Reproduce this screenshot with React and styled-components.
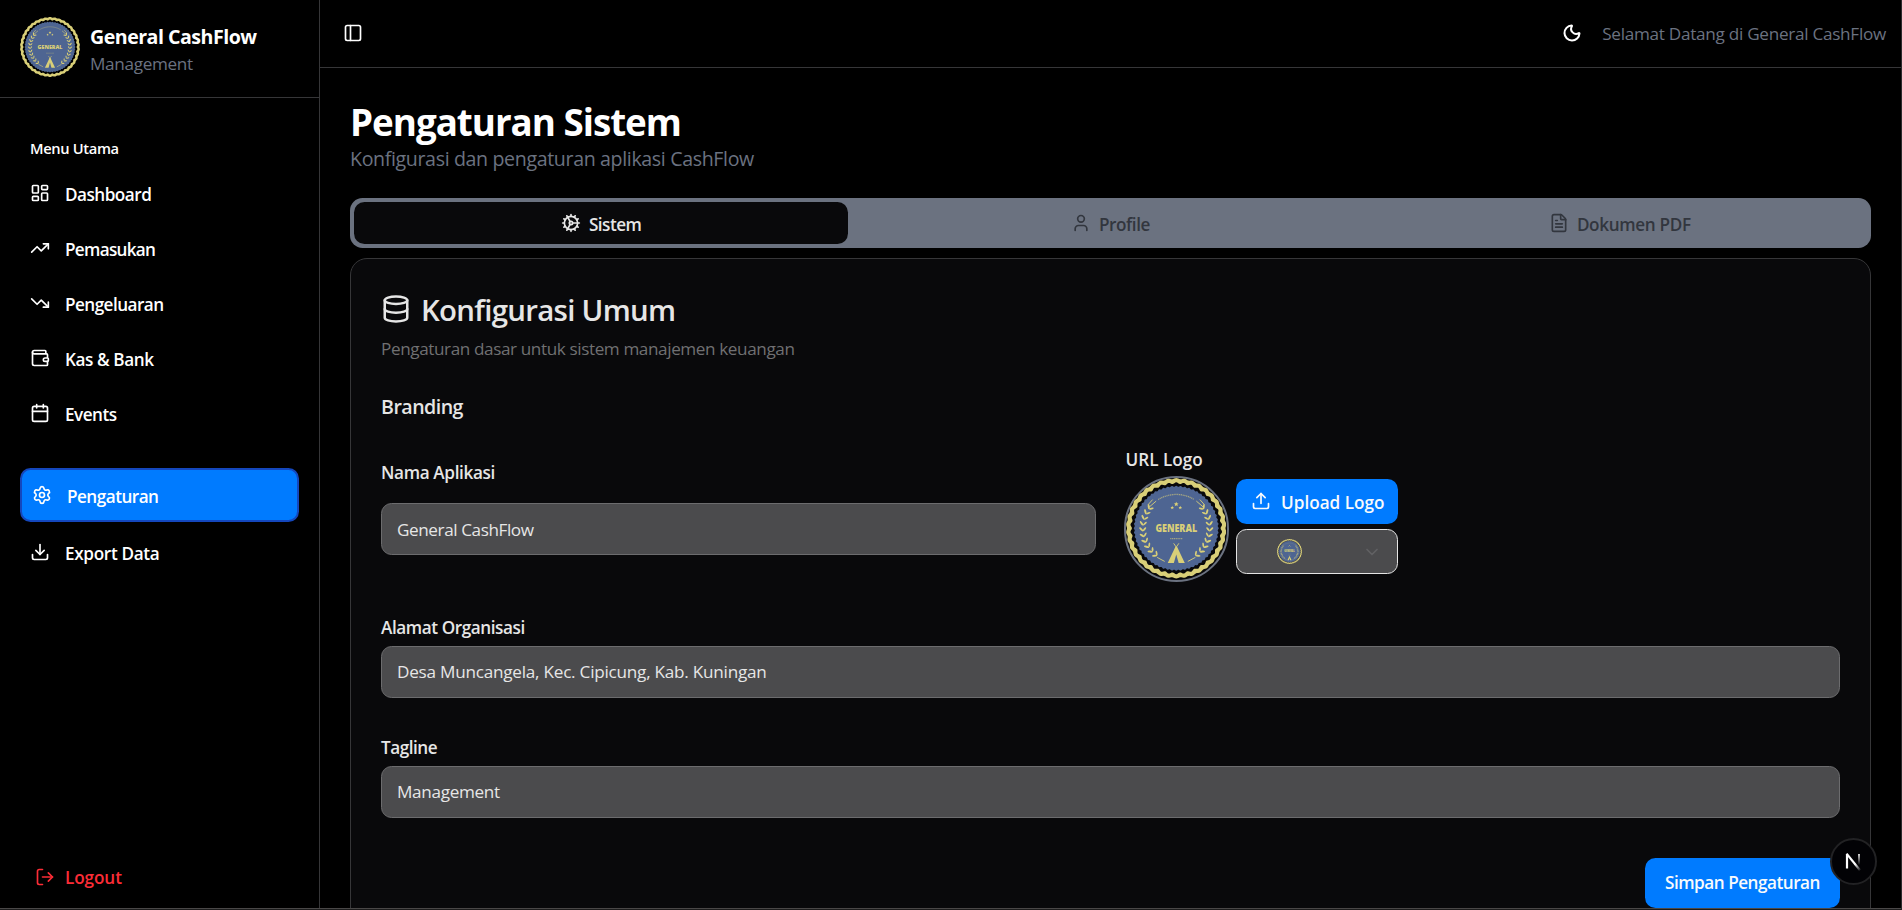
import React from "react";
import styled, { createGlobalStyle, css } from "styled-components";
import {
  LayoutDashboard, TrendingUp, TrendingDown, Wallet, Calendar, Settings, Download,
  LogOut, PanelLeft, Moon, Cog, User, FileText, Database, Upload, ChevronDown,
} from "lucide-react";

const color = {
  bg: "#000000",
  card: "#09090b",
  line: "#363638",
  muted: "#6b7280",
  primary: "#007bff",
  primaryDark: "#1447bd",
  field: "#4b4b4d",
  fieldLine: "#6c6c6e",
  text: "#e6e6e6",
  danger: "#fb2c36",
};

const GlobalStyle = createGlobalStyle`
  * { box-sizing: border-box; }
  body { margin: 0; background: ${color.bg}; overflow: hidden; }
  body, button, input {
    font-family: "Open Sans", "Noto Sans", sans-serif;
    font-size: 17.15px;
  }
  svg { flex: none; display: block; }
`;

/* ---------- Frame ---------- */

const Frame = styled.div`
  display: flex;
  height: 910px;
  background: ${color.bg};
  color: #fff;
  border-right: 1px solid #2c2c2e;
  border-bottom: 1px solid #1c1c1c;
`;

const Shell = styled.div`
  display: flex;
  flex: 1;
  min-width: 0;
  border-bottom: 1px solid #4a4848;
`;

/* ---------- Sidebar ---------- */

const Sidebar = styled.aside`
  display: flex;
  flex-direction: column;
  flex: none;
  width: 320px;
  border-right: 1px solid ${color.line};
`;

const Brand = styled.header`
  display: flex;
  align-items: center;
  gap: 10px;
  height: 98px;
  padding: 0 20px 3px;
  border-bottom: 1px solid ${color.line};
`;

const BrandText = styled.div`
  display: flex;
  flex-direction: column;
  padding-top: 5px;
`;

const BrandName = styled.strong`
  font-size: 19.6px;
  font-weight: 700;
  line-height: 28px;
  letter-spacing: -0.5px;
`;

const BrandTagline = styled.span`
  line-height: 26px;
  letter-spacing: -0.32px;
  color: ${color.muted};
`;

const Nav = styled.nav`
  display: flex;
  flex-direction: column;
  flex: 1;
  padding: 30px 20px 0;
`;

const NavHeading = styled.h2`
  margin: 0;
  padding-left: 10px;
  font-size: 14.7px;
  font-weight: 600;
  line-height: 41px;
  letter-spacing: -0.35px;
`;

const NavGroup = styled.div`
  display: flex;
  flex-direction: column;
  gap: ${(p) => p.$gap}px;
  & + & { margin-top: 29px; }
`;

const NavItem = styled.a`
  display: flex;
  align-items: center;
  gap: 15px;
  height: 50px;
  padding-left: 10px;
  border-radius: 10.5px;
  font-weight: 600;
  letter-spacing: ${(p) => p.$track}px;
  svg { margin-bottom: 2px; }
  ${(p) =>
    p.$active &&
    css`
      height: 54px;
      padding-top: 2px;
      background: ${color.primary};
      border: 2px solid ${color.primaryDark};
    `}
`;

const LogoutLink = styled.a`
  display: flex;
  align-items: center;
  gap: 10px;
  height: 50px;
  margin: 0 20px 6px;
  padding-left: 15px;
  font-weight: 600;
  letter-spacing: -0.1px;
  color: ${color.danger};
`;

/* ---------- Main ---------- */

const Main = styled.main`
  display: flex;
  flex-direction: column;
  flex: 1;
  min-width: 0;
  overflow: hidden;
`;

const TopBar = styled.header`
  display: flex;
  align-items: center;
  justify-content: space-between;
  flex: none;
  height: 68px;
  padding: 0 15px 0 23px;
  border-bottom: 1px solid ${color.line};
  svg { margin-bottom: 1px; }
`;

const TopBarEnd = styled.div`
  display: flex;
  align-items: center;
  gap: 20px;
`;

const Welcome = styled.span`
  letter-spacing: -0.28px;
  color: ${color.muted};
`;

const Content = styled.section`
  display: flex;
  flex-direction: column;
  padding: 31px 30px 0;
`;

const PageTitle = styled.h1`
  margin: 0;
  font-size: 36.75px;
  font-weight: 700;
  line-height: 47px;
  letter-spacing: -1.01px;
`;

const PageSubtitle = styled.p`
  margin: 0 0 26px;
  font-size: 19.6px;
  line-height: 26px;
  letter-spacing: -0.36px;
  color: ${color.muted};
`;

const TabList = styled.div`
  display: grid;
  grid-template-columns: repeat(3, 1fr);
  gap: 15px;
  height: 50px;
  padding: 4px;
  border-radius: 12.5px;
  background: ${color.muted};
`;

const Tab = styled.button`
  display: flex;
  align-items: center;
  justify-content: center;
  gap: 8px;
  padding: 2px 0 0;
  border: 0;
  border-radius: 10.5px;
  font-weight: 600;
  letter-spacing: ${(p) => p.$track}px;
  background: ${(p) => (p.$active ? color.card : "transparent")};
  color: ${(p) => (p.$active ? color.text : "#32363e")};
  svg { margin-bottom: 2px; }
`;

/* ---------- Settings card ---------- */

const Card = styled.article`
  display: flex;
  flex-direction: column;
  margin-top: 10px;
  padding: 30px;
  border: 1px solid ${color.line};
  border-radius: 17px;
  background: ${color.card};
  color: ${color.text};
`;

const CardTitle = styled.h2`
  display: flex;
  align-items: center;
  gap: 10px;
  margin: 0;
  font-size: 29.4px;
  font-weight: 600;
  line-height: 42px;
  letter-spacing: -0.7px;
  svg { margin-bottom: 2px; }
`;

const CardDescription = styled.p`
  margin: 5px 0 29px;
  line-height: 26px;
  letter-spacing: -0.4px;
  color: #707072;
`;

const SectionTitle = styled.h3`
  margin: 0 0 26px;
  font-size: 19.6px;
  font-weight: 600;
  line-height: 31px;
  letter-spacing: -0.53px;
`;

const BrandingGrid = styled.div`
  display: grid;
  grid-template-columns: 1fr 1fr;
  gap: 30px;
`;

const Field = styled.div`
  display: flex;
  flex-direction: column;
  gap: ${(p) => p.$gap || 6}px;
  padding-top: ${(p) => p.$offset || 0}px;
`;

const FieldLabel = styled.label`
  font-weight: 600;
  line-height: 24px;
  letter-spacing: ${(p) => p.$track || 0}px;
`;

const TextInput = styled.input`
  width: 100%;
  height: 52px;
  padding: 0 15px;
  border: 1px solid ${color.fieldLine};
  border-radius: 10.5px;
  background: ${color.field};
  color: ${color.text};
  letter-spacing: ${(p) => p.$track}px;
`;

const LogoRow = styled.div`
  display: flex;
  align-items: flex-start;
  gap: 7px;
  margin-left: -2px;
`;

const LogoPreview = styled.div`
  display: flex;
  width: 105.5px;
  height: 105.5px;
  border: 2.5px solid ${color.muted};
  border-radius: 50%;
`;

const LogoActions = styled.div`
  display: flex;
  flex-direction: column;
  gap: 5px;
  width: 162px;
  padding-top: 3px;
`;

const PrimaryButton = styled.button`
  display: flex;
  align-items: center;
  gap: 10px;
  height: ${(p) => p.$height}px;
  padding: 0;
  padding-left: ${(p) => p.$inset}px;
  border: 0;
  border-radius: 10.5px;
  background: ${color.primary};
  color: #f8fafc;
  font-weight: 600;
  letter-spacing: ${(p) => p.$track}px;
`;

const UploadButton = styled(PrimaryButton)`
  padding-top: 1px;
  svg { margin-bottom: 2px; }
`;

const SaveButton = styled(PrimaryButton)`
  width: 195px;
`;

const LogoSelect = styled.button`
  display: flex;
  align-items: center;
  justify-content: space-between;
  height: 45px;
  padding: 0 15px 0 40px;
  border: 1px solid #e5e5e5;
  border-radius: 10.5px;
  background: ${color.field};
  color: #616163;
`;

const OrgField = styled(Field)`
  margin-top: 34px;
`;

const TaglineField = styled(Field)`
  margin-top: 38px;
`;

const CardFooter = styled.footer`
  display: flex;
  justify-content: flex-end;
  margin-top: 40px;
`;

const DevBadge = styled.div`
  position: fixed;
  left: 1830px;
  top: 838px;
  display: flex;
  align-items: center;
  justify-content: center;
  width: 47px;
  height: 47px;
  border: 2px solid #222224;
  border-radius: 50%;
  background: #020205;
`;

/* ---------- Emblem ---------- */

const wavy = (radius, amp, waves) => {
  const steps = waves * 8;
  let d = "";
  for (let i = 0; i < steps; i += 1) {
    const a = (i / steps) * Math.PI * 2;
    const r = radius + amp * Math.cos(a * waves);
    d += `${i ? "L" : "M"}${(r * Math.sin(a)).toFixed(2)} ${(-r * Math.cos(a)).toFixed(2)}`;
  }
  return `${d}Z`;
};

const ringPath = wavy(49.5, 0.5, 38) + wavy(44.9, 0.8, 38);
const discPath = wavy(41.8, 0.5, 60);
const leafAngles = [-36, -26, -16, -6, 4, 14, 24, 34, 44, 54];

function Laurel({ flip }) {
  return (
    <g transform={flip ? "scale(-1 1)" : undefined}>
      {leafAngles.map((a) => (
        <g key={a} transform={`rotate(${-a}) translate(-33 0)`}>
          <ellipse cx="-1.8" cy="-1.3" rx="2.7" ry="1" transform="rotate(48 -1.8 -1.3)" />
          <ellipse cx="1.5" cy="-1.3" rx="2.4" ry="0.9" transform="rotate(-48 1.5 -1.3)" />
        </g>
      ))}
      <path d="M-19 29L-11.5 33" stroke="#d9cf78" strokeWidth="0.9" />
      <path d="M-27 -21L-20 -27M-28 -23.5L-23.5 -28.5" stroke="#d9cf78" strokeWidth="0.9" />
    </g>
  );
}

function Emblem({ size }) {
  const star = "M0-2.4L.7-.8 2.3-.7 1.1.4 1.5 2.1 0 1.2-1.5 2.1-1.1.4-2.3-.7-.7-.8Z";
  return (
    <svg width={size} height={size} viewBox="-50 -50 100 100" fill="#d9cf78">
      <path d={ringPath} fillRule="evenodd" />
      <path d={discPath} fill="#4e6592" />
      <Laurel />
      <Laurel flip />
      <path
        d="M-18 -28.5A34 34 0 0 1 18 -28.5"
        fill="none"
        stroke="#a3a583"
        strokeWidth="1.3"
        strokeDasharray="1.2 0.6"
      />
      <path d={star} transform="translate(0 -24)" />
      <path d={star} transform="translate(-4 -20.5) scale(.75)" />
      <path d={star} transform="translate(4 -20.5) scale(.75)" />
      <text
        y="3.6"
        textAnchor="middle"
        fontFamily="Open Sans, sans-serif"
        fontWeight="800"
        fontSize="9.8"
        textLength="41.5"
        lengthAdjust="spacingAndGlyphs"
      >
        GENERAL
      </text>
      <path d="M-6 10.3H6" stroke="#a3a583" strokeWidth="1.2" strokeDasharray="1.2 0.6" />
      <path d="M-0.8 18.5L-8.5 34.5H-2.4L0 26L2.4 34.5H8.5L0.8 18.5Z" />
      <path d="M-2.6 15L0.8 20M2.6 15L-0.8 20" stroke="#d9cf78" strokeWidth="0.9" />
    </svg>
  );
}

function NMark() {
  return (
    <svg width="17" height="19" viewBox="0 0 17 19" fill="none">
      <defs>
        <linearGradient id="markDiagonal" x1="8" y1="9" x2="16" y2="18.5" gradientUnits="userSpaceOnUse">
          <stop offset="0.3" stopColor="#fff" />
          <stop offset="1" stopColor="#fff" stopOpacity="0" />
        </linearGradient>
        <linearGradient id="markStem" x1="0" y1="1" x2="0" y2="13" gradientUnits="userSpaceOnUse">
          <stop offset="0" stopColor="#fff" />
          <stop offset="1" stopColor="#fff" stopOpacity="0" />
        </linearGradient>
      </defs>
      <path d="M2 16.5V2.2" stroke="#fff" strokeWidth="2.2" />
      <path d="M1.6 1.6L15 18.2" stroke="url(#markDiagonal)" strokeWidth="2.2" />
      <path d="M14 2V13" stroke="url(#markStem)" strokeWidth="1.8" />
    </svg>
  );
}

/* ---------- Data ---------- */

const mainMenu = [
  { label: "Dashboard", icon: LayoutDashboard, track: -0.51 },
  { label: "Pemasukan", icon: TrendingUp, track: -0.7 },
  { label: "Pengeluaran", icon: TrendingDown, track: -0.55 },
  { label: "Kas & Bank", icon: Wallet, track: -0.42 },
  { label: "Events", icon: Calendar, track: -0.52 },
];

const toolMenu = [
  { label: "Pengaturan", icon: Settings, track: -0.52, active: true },
  { label: "Export Data", icon: Download, track: -0.33 },
];

const tabs = [
  { label: "Sistem", icon: Cog, track: -0.5, active: true },
  { label: "Profile", icon: User, track: -0.42 },
  { label: "Dokumen PDF", icon: FileText, track: -0.33 },
];

function Menu({ items, gap }) {
  return (
    <NavGroup $gap={gap}>
      {items.map(({ label, icon: Icon, track, active }) => (
        <NavItem key={label} $track={track} $active={active}>
          <Icon size={20} />
          {label}
        </NavItem>
      ))}
    </NavGroup>
  );
}

export default function App() {
  return (
    <>
      <GlobalStyle />
      <Frame>
        <Shell>
          <Sidebar>
            <Brand>
              <Emblem size={60} />
              <BrandText>
                <BrandName>General CashFlow</BrandName>
                <BrandTagline>Management</BrandTagline>
              </BrandText>
            </Brand>
            <Nav>
              <NavHeading>Menu Utama</NavHeading>
              <Menu items={mainMenu} gap={5} />
              <Menu items={toolMenu} gap={6} />
            </Nav>
            <LogoutLink>
              <LogOut size={20} />
              Logout
            </LogoutLink>
          </Sidebar>

          <Main>
            <TopBar>
              <PanelLeft size={20} />
              <TopBarEnd>
                <Moon size={20} strokeWidth={2.4} />
                <Welcome>Selamat Datang di General CashFlow</Welcome>
              </TopBarEnd>
            </TopBar>

            <Content>
              <PageTitle>Pengaturan Sistem</PageTitle>
              <PageSubtitle>Konfigurasi dan pengaturan aplikasi CashFlow</PageSubtitle>

              <TabList>
                {tabs.map(({ label, icon: Icon, track, active }) => (
                  <Tab key={label} $track={track} $active={active}>
                    <Icon size={20} />
                    {label}
                  </Tab>
                ))}
              </TabList>

              <Card>
                <CardTitle>
                  <Database size={30} />
                  Konfigurasi Umum
                </CardTitle>
                <CardDescription>Pengaturan dasar untuk sistem manajemen keuangan</CardDescription>
                <SectionTitle>Branding</SectionTitle>

                <BrandingGrid>
                  <Field $gap={18} $offset={13}>
                    <FieldLabel $track={-0.35}>Nama Aplikasi</FieldLabel>
                    <TextInput $track={-0.42} defaultValue="General CashFlow" />
                  </Field>
                  <Field $gap={4}>
                    <FieldLabel>URL Logo</FieldLabel>
                    <LogoRow>
                      <LogoPreview>
                        <Emblem size={100.5} />
                      </LogoPreview>
                      <LogoActions>
                        <UploadButton $height={45} $inset={15} $track={0}>
                          <Upload size={20} />
                          Upload Logo
                        </UploadButton>
                        <LogoSelect>
                          <Emblem size={25} />
                          <ChevronDown size={20} />
                        </LogoSelect>
                      </LogoActions>
                    </LogoRow>
                  </Field>
                </BrandingGrid>

                <OrgField>
                  <FieldLabel $track={-0.42}>Alamat Organisasi</FieldLabel>
                  <TextInput
                    $track={-0.24}
                    defaultValue="Desa Muncangela, Kec. Cipicung, Kab. Kuningan"
                  />
                </OrgField>
                <TaglineField>
                  <FieldLabel $track={-0.48}>Tagline</FieldLabel>
                  <TextInput $track={-0.32} defaultValue="Management" />
                </TaglineField>

                <CardFooter>
                  <SaveButton $height={50} $inset={20} $track={-0.48}>
                    Simpan Pengaturan
                  </SaveButton>
                </CardFooter>
              </Card>
            </Content>
          </Main>
        </Shell>
      </Frame>
      <DevBadge>
        <NMark />
      </DevBadge>
    </>
  );
}
